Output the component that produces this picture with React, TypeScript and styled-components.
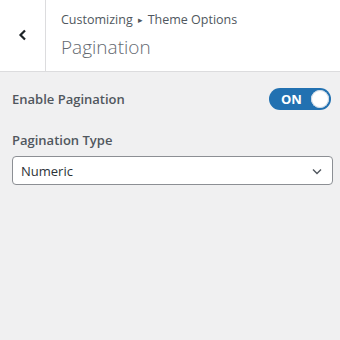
import styled, { createGlobalStyle } from "styled-components";

const GlobalStyle = createGlobalStyle`
    html, body {
        margin: 0;
        padding: 0;
        background: #f0f0f1;
    }
    body {
        font-family: "Open Sans", "Noto Sans", sans-serif;
        color: #50575e;
    }
`;

const PanelEl = styled.div`
    width: 340px;
    height: 340px;
    background: #f0f0f1;
    display: flex;
    flex-direction: column;
`;

const HeaderEl = styled.header`
    height: 71px;
    background: #fff;
    border-bottom: 1px solid #dcdcde;
    display: flex;
`;

const BackButtonEl = styled.button`
    width: 46px;
    border: none;
    border-right: 1px solid #dcdcde;
    background: #fff;
    padding: 0 0 2px;
    display: flex;
    align-items: center;
    justify-content: center;
    color: #1d2327;
`;

const TitleWrapEl = styled.div`
    padding: 10px 0 0 15px;
    display: flex;
    flex-direction: column;
`;

const CrumbEl = styled.span`
    font-size: 12.5px;
    line-height: 20px;
    color: #50575e;
`;

const SepEl = styled.span`
    font-size: 9px;
    margin: 0 5px;
    vertical-align: 1px;
`;

const TitleEl = styled.h1`
    margin: 4px 0 0;
    font-size: 19px;
    font-weight: 300;
    line-height: 26px;
    color: #646970;
`;

const BodyEl = styled.div`
    padding: 15px 7px 0 12px;
    display: flex;
    flex-direction: column;
`;

const RowEl = styled.div`
    display: flex;
    align-items: center;
    justify-content: space-between;
    height: 24px;
`;

const LabelEl = styled.label`
    font-size: 13px;
    font-weight: 600;
    color: #50575e;
    line-height: 20px;
`;

const ToggleEl = styled.div<{ $on: boolean }>`
    width: 62px;
    height: 22px;
    margin-right: 2px;
    box-sizing: border-box;
    border-radius: 11px;
    background: ${(p) => (p.$on ? "#2271b1" : "#c3c4c7")};
    display: flex;
    align-items: center;
    justify-content: space-between;
    padding: 0 2px 0 12px;
`;

const ToggleTextEl = styled.span`
    color: #fff;
    font-size: 13px;
    font-weight: 700;
    line-height: 1;
`;

const KnobEl = styled.span`
    width: 18px;
    height: 18px;
    border-radius: 50%;
    background: #fff;
    box-shadow: inset 0 0 0 1px #c9d6e3;
`;

const FieldEl = styled.div`
    margin-top: 19px;
    display: flex;
    flex-direction: column;
    gap: 6px;
`;

const SelectEl = styled.div`
    height: 29px;
    box-sizing: border-box;
    border: 1px solid #8c8f94;
    border-radius: 4px;
    background: #fff;
    display: flex;
    align-items: center;
    justify-content: space-between;
    padding: 0 8px 0 8px;
    font-size: 13px;
    color: #2c3338;
`;

export default function App() {
    return (
        <PanelEl>
            <GlobalStyle />
            <HeaderEl>
                <BackButtonEl aria-label="Back">
                    <svg width="14" height="14" viewBox="0 0 14 14">
                        <path
                            d="M9 2.5 L4.5 7 L9 11.5"
                            fill="none"
                            stroke="#1d2327"
                            strokeWidth="2.2"
                        />
                    </svg>
                </BackButtonEl>
                <TitleWrapEl>
                    <CrumbEl>
                        Customizing<SepEl>▸</SepEl>Theme Options
                    </CrumbEl>
                    <TitleEl>Pagination</TitleEl>
                </TitleWrapEl>
            </HeaderEl>
            <BodyEl>
                <RowEl>
                    <LabelEl>Enable Pagination</LabelEl>
                    <ToggleEl $on>
                        <ToggleTextEl>ON</ToggleTextEl>
                        <KnobEl />
                    </ToggleEl>
                </RowEl>
                <FieldEl>
                    <LabelEl>Pagination Type</LabelEl>
                    <SelectEl>
                        <span>Numeric</span>
                        <svg width="14" height="14" viewBox="0 0 14 14">
                            <path
                                d="M3 5.5 L7 9.5 L11 5.5"
                                fill="none"
                                stroke="#50575e"
                                strokeWidth="1.4"
                            />
                        </svg>
                    </SelectEl>
                </FieldEl>
            </BodyEl>
        </PanelEl>
    );
}
